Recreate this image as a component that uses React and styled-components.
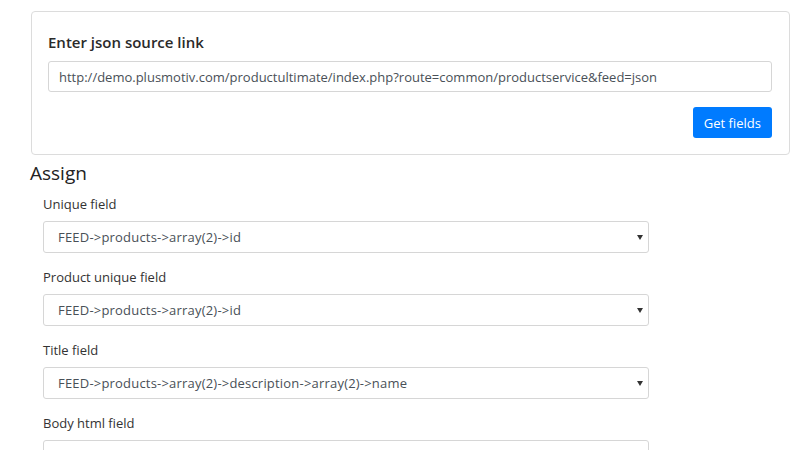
import React from 'react';
import styled, { createGlobalStyle } from 'styled-components';

const GlobalStyle = createGlobalStyle`
  body {
    margin: 0;
    background: #fff;
    font-family: "Open Sans", "Noto Sans", sans-serif;
    color: #212529;
  }
`;

const fields = [
  { label: 'Unique field', value: 'FEED->products->array(2)->id' },
  { label: 'Product unique field', value: 'FEED->products->array(2)->id' },
  { label: 'Title field', value: 'FEED->products->array(2)->description->array(2)->name' },
  { label: 'Body html field', value: '' },
];

function App() {
  return (
    <Page>
      <GlobalStyle />
      <Card>
        <CardTitle>Enter json source link</CardTitle>
        <TextInput
          readOnly
          value="http://demo.plusmotiv.com/productultimate/index.php?route=common/productservice&feed=json"
        />
        <Actions>
          <Button>Get fields</Button>
        </Actions>
      </Card>
      <Heading>Assign</Heading>
      <FieldList>
        {fields.map((f) => (
          <Group key={f.label}>
            <Label>{f.label}</Label>
            <Select>
              <span>{f.value}</span>
              <Caret />
            </Select>
          </Group>
        ))}
      </FieldList>
    </Page>
  );
}

const Page = styled.div`
  padding: 11px 10px 0 30px;
  height: 450px;
  overflow: hidden;
  box-sizing: border-box;
`;

const Card = styled.div`
  margin-left: 1px;
  border: 1px solid #dcdcdc;
  border-radius: 4px;
  padding: 19px 17px 16px 16px;
  display: flex;
  flex-direction: column;
`;

const CardTitle = styled.h5`
  margin: 0 0 8px;
  font-size: 15px;
  font-weight: 600;
  line-height: 22px;
  color: #2a2a2a;
`;

const TextInput = styled.input`
  height: 31px;
  box-sizing: border-box;
  border: 1px solid #d6d6d6;
  border-radius: 3px;
  padding: 0 10px;
  font-family: inherit;
  font-size: 13px;
  color: #495057;
  outline: none;
`;

const Actions = styled.div`
  display: flex;
  justify-content: flex-end;
  margin-top: 15px;
`;

const Button = styled.button`
  height: 31px;
  padding: 0 11px;
  background: #007bff;
  border: none;
  border-radius: 3px;
  color: #fff;
  font-family: inherit;
  font-size: 13px;
`;

const Heading = styled.h4`
  margin: 5px 0 0;
  font-size: 19px;
  font-weight: 400;
  line-height: 26px;
  color: #222;
`;

const FieldList = styled.div`
  padding: 3px 0 0 13px;
  width: 606px;
  display: flex;
  flex-direction: column;
  gap: 9px;
`;

const Group = styled.div`
  display: flex;
  flex-direction: column;
`;

const Label = styled.label`
  font-size: 13px;
  line-height: 18px;
  margin: 6px 0 8px;
  color: #333;
`;

const Select = styled.div`
  height: 32px;
  box-sizing: border-box;
  border: 1px solid #d6d6d6;
  border-radius: 3px;
  padding: 0 5px 0 14px;
  display: flex;
  align-items: center;
  justify-content: space-between;
  font-size: 13px;
  letter-spacing: 0.2px;
  color: #495057;
`;

const Caret = styled.span`
  width: 0;
  height: 0;
  border-left: 3px solid transparent;
  border-right: 3px solid transparent;
  border-top: 5px solid #333;
`;

export default App;
